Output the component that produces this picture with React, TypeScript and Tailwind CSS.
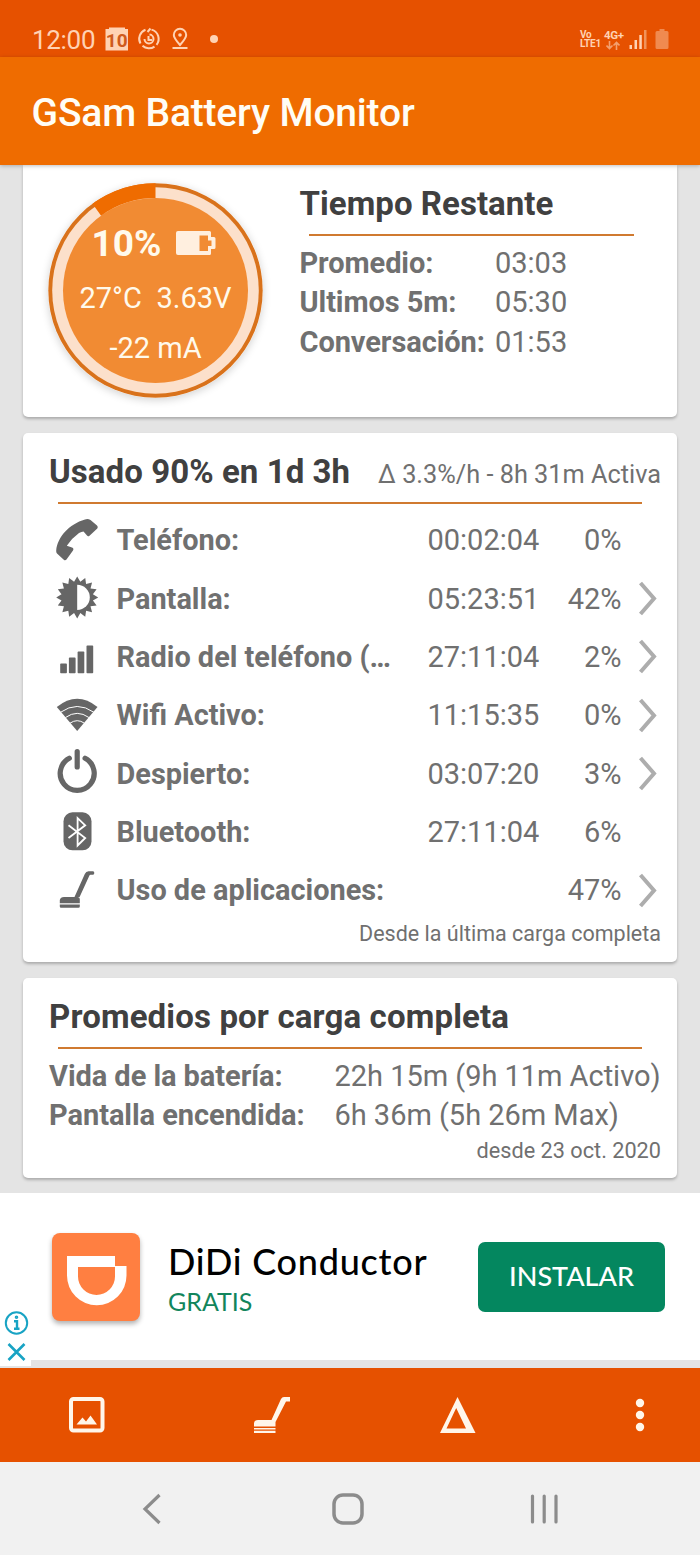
import type { ReactNode } from "react";

const usage = [
  { id: "phone", label: "Teléfono:", time: "00:02:04", percent: "0%", more: false },
  { id: "screen", label: "Pantalla:", time: "05:23:51", percent: "42%", more: true },
  { id: "radio", label: "Radio del teléfono (…", time: "27:11:04", percent: "2%", more: true },
  { id: "wifi", label: "Wifi Activo:", time: "11:15:35", percent: "0%", more: true },
  { id: "awake", label: "Despierto:", time: "03:07:20", percent: "3%", more: true },
  { id: "bluetooth", label: "Bluetooth:", time: "27:11:04", percent: "6%", more: false },
  { id: "apps", label: "Uso de aplicaciones:", time: "", percent: "47%", more: true },
];

const remaining = [
  { label: "Promedio:", value: "03:03" },
  { label: "Ultimos 5m:", value: "05:30" },
  { label: "Conversación:", value: "01:53" },
];

const averages = [
  { label: "Vida de la batería:", value: "22h 15m (9h 11m Activo)" },
  { label: "Pantalla encendida:", value: "6h 36m (5h 26m Max)" },
];

const sunPoints = Array.from({ length: 32 }, (_, i) => {
  const radius = i % 2 === 0 ? 21 : 16;
  const angle = (i * Math.PI) / 16;
  return `${22.2 + radius * Math.sin(angle)},${20.4 - radius * Math.cos(angle)}`;
}).join(" ");

const icons: Record<string, ReactNode> = {
  phone: (
    <path d="M30 .4Q33-.6 35.500 1L42 6.500Q43.500 8 42.300 9.500L34.500 16.700Q33 17.800 32 16.500L28.500 12.400Q26.500 12.600 24 14Q17 19 11.800 26.800L17 28.600Q19.200 29.500 18 31.500L11.500 40.500Q10.300 42 8.800 40.800L2 34.500Q1 33.500 1.200 31.500C2.500 18 14 5 30 .4Z" />
  ),
  screen: (
    <>
      <polygon points={sunPoints} />
      <path d="M22.200 7.800a12.600 12.600 0 0 1 0 25.200Z" fill="#fff" />
    </>
  ),
  radio: (
    <>
      <rect x="5.200" y="27.600" width="6.700" height="9.700" rx=".8" />
      <rect x="13.900" y="21.600" width="6.700" height="15.700" rx=".8" />
      <rect x="22.600" y="15.600" width="6.700" height="21.700" rx=".8" />
      <rect x="31.500" y="9.600" width="6.700" height="27.700" rx=".8" />
    </>
  ),
  wifi: (
    <>
      <path d="M1.800 13Q22.200-3.500 42.500 13L22.200 37Z" />
      <path
        d="M5.500 18.300Q22.200 6.600 38.900 18.300M10.500 23.500Q22.200 15.200 33.900 23.500M15 29.200Q22.200 24.200 29.400 29.200"
        fill="none"
        stroke="#fff"
        strokeWidth="1"
      />
    </>
  ),
  awake: (
    <path
      d="M14.300 6.300A17 17 0 1 0 30.100 6.300M22.200-.5V15"
      fill="none"
      stroke="#666"
      strokeWidth="5.200"
      strokeLinecap="round"
    />
  ),
  bluetooth: (
    <>
      <rect x="8.500" y="1.300" width="28" height="38" rx="9" />
      <path
        d="M13.500 14.300 30.200 27 22.600 34.500V7L30.200 14.300 13.500 27"
        fill="none"
        stroke="#fff"
        strokeWidth="1.800"
      />
    </>
  ),
  apps: (
    <>
      <path d="M19.500 28 29.800 5Q31 2.300 33.500 2.300H38Q39.300 2.300 39.300 4T38 5.800H35.500Q34.700 5.800 34.200 7L24.600 28Z" />
      <path d="M4.800 34.300V31Q5.500 28 9 28H22.500Q24.800 28 24.800 30V34.300ZM4.800 35.500H24.800V37.500Q24.800 38.800 23.500 38.800H6Q4.800 38.800 4.800 37.500Z" />
    </>
  ),
};

const StatusBar = () => (
  <div className="flex h-[57px] items-start bg-[#e65100] pl-[32px] pr-[31px] pt-[24px] text-[#ffd2b3]">
    <span className="w-[73px] text-[26px] leading-[32px] tracking-[-0.3px]">12:00</span>
    <svg width="24" height="24" viewBox="0 0 24 24" className="mt-[3px]">
      <path d="M.5 2H4V.5H20V2H23V23.500H.5Z" fill="#ffd2b3" />
      <text x="11.700" y="19.500" textAnchor="middle" fontSize="19" fontWeight="700" fill="#cf5a1c" fontFamily="Roboto">
        10
      </text>
    </svg>
    <svg width="24" height="24" viewBox="0 0 24 24" className="ml-[8px] mt-[3px]" fill="none" stroke="#ffd2b3" strokeWidth="2">
      <path d="M8.500 2.800A9.500 9.500 0 0 0 3.500 16.500M5.500 18.800A9.500 9.500 0 0 0 17.500 19.600M19.500 17.800A9.500 9.500 0 0 0 14.500 2.600" />
      <path d="M13.500 1.500 10.500 5" />
      <path d="M12.500 7.500A4.500 4.500 0 1 1 7.500 12M11.500 9V13H15" />
    </svg>
    <svg width="18" height="24" viewBox="0 0 18 24" className="ml-[10px] mt-[3px]" fill="none" stroke="#ffd2b3" strokeWidth="2">
      <path d="M9 18C5 13.500 2.800 11 2.800 8a6.200 6.200 0 0 1 12.400 0C15.200 11 13 13.500 9 18ZM1.500 21H16.500" />
      <circle cx="9" cy="8" r="1.800" fill="#ffd2b3" stroke="none" />
    </svg>
    <span className="ml-[21px] mt-[11px] h-[8px] w-[8px] rounded-full bg-[#ffd2b3]" />
    <div className="ml-auto mt-[6px] flex">
      <div className="w-[24px] text-[10px] font-bold leading-[9px] tracking-[-0.2px]">
        <div>Vo</div>
        <div>LTE1</div>
      </div>
      <div className="w-[25px]">
        <div className="text-[11.500px] font-bold leading-[10px] tracking-[-0.3px]">4G+</div>
        <svg width="14" height="9" viewBox="0 0 14 9" className="ml-[2px] mt-[1px]" fill="none" stroke="#f3a070" strokeWidth="1.600">
          <path d="M3.500 0V7.500M.5 4.500l3 3 3-3M10.500 9V1.500M7.500 4.500l3-3 3 3" />
        </svg>
      </div>
      <svg width="18" height="20" viewBox="0 0 18 20" fill="#ffd2b3">
        <rect x=".5" y="15" width="2.500" height="4" />
        <rect x="5.500" y="10" width="2.500" height="9" />
        <rect x="10.300" y="5" width="2.500" height="14" />
        <rect x="15" y="0" width="2.500" height="19" fill="#f0935a" />
      </svg>
      <svg width="14" height="21" viewBox="0 0 14 21" className="ml-[8px] -mt-px" fill="#f08a50">
        <path d="M4.500 0h5v2H12q1.500 0 1.500 1.500V18.500q0 1.500-1.500 1.500H2Q.5 20 .5 18.500V3.500Q.5 2 2 2h2.500Z" />
      </svg>
    </div>
  </div>
);

const BatteryDial = () => (
  <div className="relative ml-[25px] mt-[18px] h-[215px] w-[215px] shrink-0 rounded-full shadow-[0_2px_8px_rgba(0,0,0,0.18)]">
    <svg width="215" height="215" viewBox="-107.500 -107.500 215 215">
      <circle r="107.200" fill="#d9721b" />
      <circle r="103.300" fill="#fce0cb" />
      <circle r="92.500" fill="#f18b33" />
      <path d="M0-107.200A107.200 107.200 0 0 0-63-86.700L-54.400-74.800A92.500 92.500 0 0 1 0-92.500Z" fill="#ef6c00" />
    </svg>
    <div className="absolute inset-0 pt-[40px] text-[29px] text-[#fffaec]">
      <div className="flex h-[42px] items-center pl-[43.500px] text-[37px] font-bold leading-[42px]">
        <span className="w-[84.500px]">10%</span>
        <svg width="40" height="24" viewBox="0 0 40 24" className="mb-[2px]" fill="#ffefdf">
          <path
            fillRule="evenodd"
            d="M2 0H33.500Q35 0 35 1.500V6H38Q39.500 6 39.500 7.500V16.500Q39.500 18 38 18H35V22.500Q35 24 33.500 24H2Q0 24 0 22V2Q0 0 2 0ZM23.500 4.500V20H32V15H35.500V9.500H32V4.500Z"
          />
        </svg>
      </div>
      <div className="flex pl-[31.500px] pt-[16px] leading-[34px]">
        <span className="w-[77px]">27°C</span>
        <span>3.63V</span>
      </div>
      <div className="pt-[16px] text-center leading-[34px]">-22 mA</div>
    </div>
  </div>
);

const Chevron = () => (
  <svg width="20" height="36" viewBox="0 0 20 36" className="ml-[16px] mb-[3px]" fill="none" stroke="#adadad" strokeWidth="4">
    <path d="M2.500 3 16 18.500 2.500 34" />
  </svg>
);

const AdBanner = () => (
  <div className="relative h-[167px] bg-white">
    <div className="flex h-full pl-[52px] pr-[35px]">
      <div className="mt-[40px] h-[88px] w-[88px] rounded-[8px] bg-[#ff7f41] shadow-[0_3px_5px_rgba(0,0,0,0.3)]">
        <svg width="88" height="88" viewBox="0 0 88 88">
          <path
            d="M15 23H63V33H74.500V42.500A29.700 29.700 0 0 1 15 42.500ZM26 34V43.500A18.500 18.500 0 0 0 63 43.500V34Z"
            fill="#fff"
            fillRule="evenodd"
          />
        </svg>
      </div>
      <div className="ml-[28px] pt-[47px] font-['Lato',sans-serif]">
        <div className="whitespace-nowrap text-[36px] font-medium leading-[42px] tracking-[0.75px] text-black">DiDi Conductor</div>
        <div className="text-[25px] leading-[38px] text-[#12855c]">GRATIS</div>
      </div>
      <button className="ml-auto mt-[49px] h-[70px] w-[187px] shrink-0 rounded-[7px] bg-[#04875f] pb-[2px] font-['Lato',sans-serif] text-[27px] font-medium text-white">
        INSTALAR
      </button>
    </div>
    <div className="absolute left-0 top-[115px] flex h-[58px] w-[31px] flex-col items-center bg-white pt-[3px]">
      <svg width="26" height="52" viewBox="0 0 26 52" fill="none" stroke="#18a3c4" strokeWidth="2">
        <circle cx="13.500" cy="12" r="10.700" />
        <path d="M11 10.300H14V18M11 17.800H16.500" strokeWidth="2.400" />
        <circle cx="13.500" cy="6.300" r="1" strokeWidth="1.600" />
        <path d="M5.500 33 21.500 49M21.500 33 5.500 49" strokeWidth="2.600" />
      </svg>
    </div>
  </div>
);

const ActionBar = () => (
  <div className="mt-[8px] flex h-[94px] items-center bg-[#e65100] text-[#fff6ea]">
    <svg width="36" height="36" viewBox="0 0 36 36" className="ml-[69px]">
      <rect x="2" y="2" width="31.500" height="31.500" rx="2.500" fill="none" stroke="currentColor" strokeWidth="4" />
      <path d="M7.500 27.500 13.500 20.500 17 24.500 21.500 18.500 28 27.500Z" fill="currentColor" />
    </svg>
    <svg width="36" height="36" viewBox="0 0 36 36" className="ml-[149px]" fill="currentColor">
      <path d="M0 29.500V26Q.5 23 4 23H17.500L27 2Q28 0 30 0H36V4.500H32L21.500 25V29.500ZM0 31H21.500V32.500H0ZM0 33.700H21.500V36H0Z" />
    </svg>
    <svg width="36" height="36" viewBox="0 0 36 36" className="ml-[150px]" fill="currentColor">
      <path fillRule="evenodd" d="M17.500 0 35.500 36H0ZM16.200 11 6.500 31.500H26Z" />
    </svg>
    <svg width="10" height="34" viewBox="0 0 10 34" className="ml-[159px]" fill="currentColor">
      <circle cx="5" cy="5" r="4.200" />
      <circle cx="5" cy="17" r="4.200" />
      <circle cx="5" cy="29" r="4.200" />
    </svg>
  </div>
);

const NavBar = () => (
  <div className="flex h-[93px] items-center bg-[#f1f1f1]">
    <svg width="20" height="32" viewBox="0 0 20 32" className="ml-[142px]" fill="none" stroke="#8c8c8c" strokeWidth="3.200">
      <path d="M17.500 2 3 16 17.500 30" />
    </svg>
    <svg width="32" height="32" viewBox="0 0 32 32" className="ml-[170px]" fill="none" stroke="#8c8c8c" strokeWidth="3.500">
      <rect x="2" y="2" width="28" height="28" rx="9" />
    </svg>
    <svg width="30" height="30" viewBox="0 0 30 30" className="ml-[165px]" fill="none" stroke="#8c8c8c" strokeWidth="3.200" strokeLinecap="round">
      <path d="M3.500 2V28M15.200 2V28M27 2V28" />
    </svg>
  </div>
);

export default function App() {
  return (
    <div className="h-[1555px] w-[700px] overflow-hidden bg-[#e4e4e4] font-['Roboto',sans-serif] text-[#707070]">
      <StatusBar />
      <header className="relative flex h-[108px] items-center bg-[#ef6c00] pl-[31.500px] pt-[5px] text-[39px] font-medium tracking-[-0.18px] text-[#fffdf5] shadow-[0_1px_4px_rgba(0,0,0,0.25)]">
        GSam Battery Monitor
      </header>

      <main className="flex h-[1028px] flex-col px-[23px] text-[29px]">
        <section className="flex h-[252px] rounded-b-[5px] bg-white shadow-[0_2px_3px_rgba(0,0,0,0.25)]">
          <BatteryDial />
          <div className="ml-[36.500px] pt-[18px]">
            <h2 className="text-[33px] font-bold leading-[41px] tracking-[0.05px] text-[#404040]">Tiempo Restante</h2>
            <div className="mb-[7.500px] ml-[9.500px] mt-[10px] h-[2px] w-[325px] bg-[#d07a30]" />
            {remaining.map((item) => (
              <div key={item.label} className="flex h-[39.600px] items-center">
                <span className="w-[195.500px] font-bold tracking-[-0.08px]">{item.label}</span>
                <span>{item.value}</span>
              </div>
            ))}
          </div>
        </section>

        <section className="mt-[16px] h-[529px] rounded-[5px] bg-white pt-[18px] shadow-[0_2px_3px_rgba(0,0,0,0.25)]">
          <div className="flex h-[41px] items-baseline justify-between pl-[26px] pr-[16px] leading-[41px]">
            <h2 className="text-[33px] font-bold tracking-[0.07px] text-[#404040]">Usado 90% en 1d 3h</h2>
            <span className="text-[25.300px]">Δ 3.3%/h - 8h 31m Activa</span>
          </div>
          <div className="mb-[8px] ml-[35px] mt-[10px] h-[2px] w-[584px] bg-[#d07a30]" />
          {usage.map((item) => (
            <div key={item.id} className="flex h-[58.330px] items-center">
              <svg width="44" height="44" viewBox="0 0 44 44" className="ml-[32px] shrink-0 overflow-visible" fill="#666">
                {icons[item.id]}
              </svg>
              <span className="ml-[17.500px] w-[311px] whitespace-nowrap text-[28.900px] font-bold">{item.label}</span>
              <span className="w-[114px]">{item.time}</span>
              <span className="w-[80px] text-right">{item.percent}</span>
              {item.more && <Chevron />}
            </div>
          ))}
          <div className="-mt-px pr-[16px] text-right text-[21.500px] leading-[29px]">Desde la última carga completa</div>
        </section>

        <section className="mt-[15.500px] h-[200.500px] rounded-[5px] bg-white pt-[18.500px] shadow-[0_2px_3px_rgba(0,0,0,0.25)]">
          <h2 className="pl-[26px] text-[33px] font-bold leading-[41px] tracking-[0.14px] text-[#404040]">Promedios por carga completa</h2>
          <div className="mb-[7.500px] ml-[35px] mt-[10px] h-[2px] w-[584px] bg-[#d07a30]" />
          {averages.map((item) => (
            <div key={item.label} className="flex h-[39.600px] items-center pl-[26px]">
              <span className="w-[285.500px] font-bold tracking-[-0.06px]">{item.label}</span>
              <span className="whitespace-nowrap tracking-[-0.03px]">{item.value}</span>
            </div>
          ))}
          <div className="pr-[16px] text-right text-[21.700px] leading-[29px]">desde 23 oct. 2020</div>
        </section>
      </main>

      <AdBanner />
      <ActionBar />
      <NavBar />
    </div>
  );
}
